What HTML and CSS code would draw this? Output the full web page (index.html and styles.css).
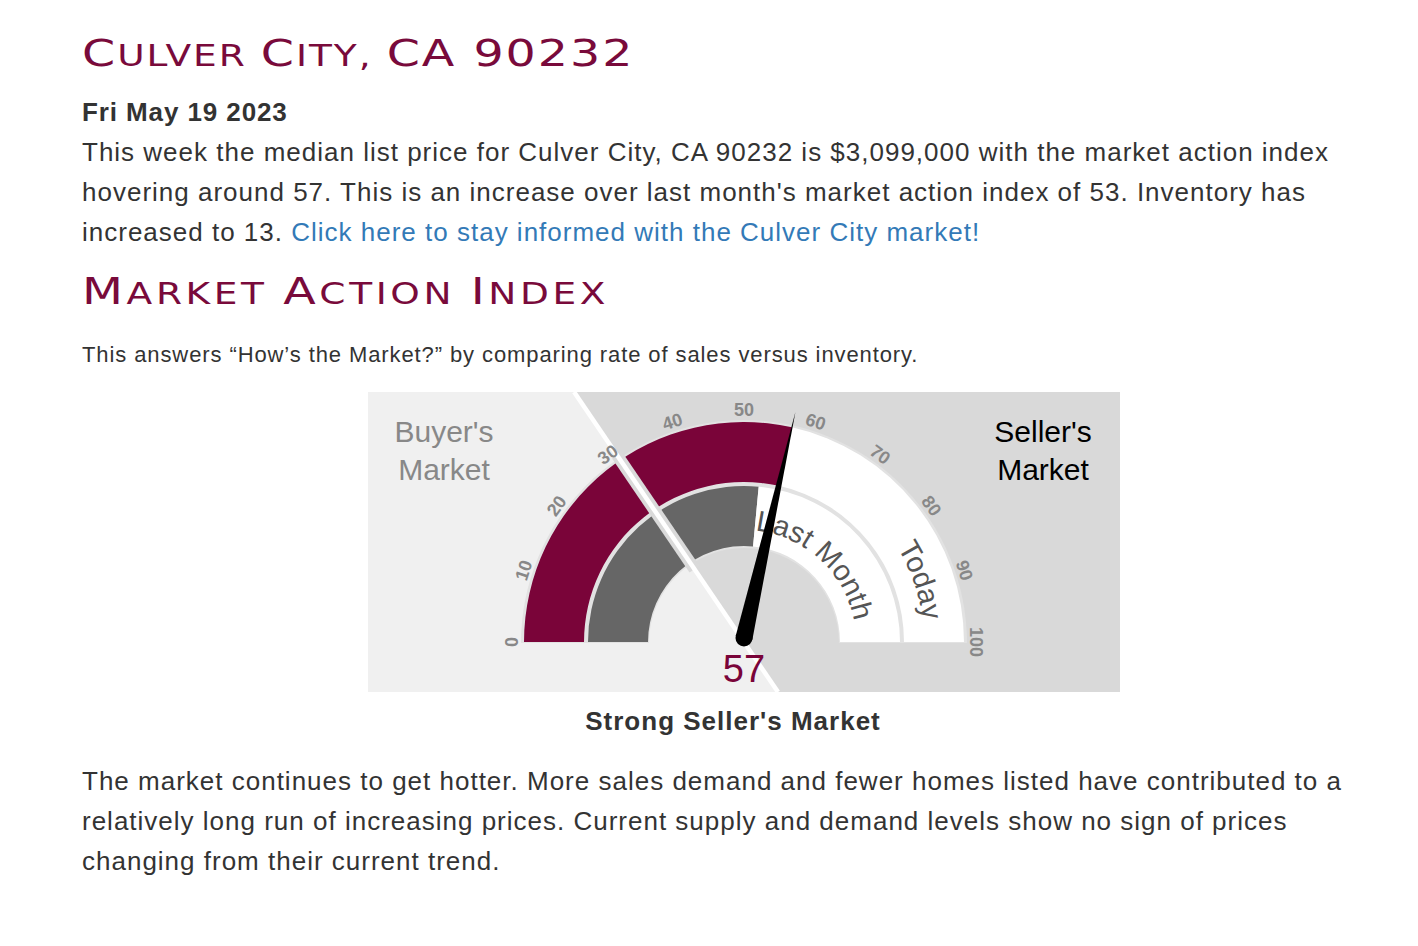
FILE: index.html
```html
<!DOCTYPE html>
<html lang="en">
<head>
<meta charset="utf-8">
<title>Culver City, CA 90232 - Market Action Index</title>
<link rel="stylesheet" href="styles.css">
</head>
<body>
<div class="page">
  <h1 class="heading"><span class="cap">C</span>ulver <span class="cap">C</span>ity, <span class="cap">CA 90232</span></h1>
  <div class="date">Fri May 19 2023</div>
  <p class="text">This week the median list price for Culver City, CA 90232 is $3,099,000 with the market action index hovering around 57. This is an increase over last month's market action index of 53. Inventory has increased to 13. <a class="link" href="#">Click here to stay informed with the Culver City market!</a></p>

  <h2 class="heading heading-2"><span class="cap">M</span>arket <span class="cap">A</span>ction <span class="cap">I</span>ndex</h2>
  <p class="intro">This answers “How’s the Market?” by comparing rate of sales versus inventory.</p>

  <div class="gauge">
    <svg class="gauge-svg" viewBox="0 0 752 300" width="752" height="300">
      <defs>
        <path id="arcLM" d="M264,250 A112,112 0 0 1 488,250"/>
        <path id="arcT" d="M196,250 A180,180 0 0 1 556,250"/>
      </defs>
      <polygon points="0,0 206.1,0 410,300 0,300" fill="#f0f0f0"/>
      <polygon points="206.1,0 752,0 752,300 410,300" fill="#d9d9d9"/>
      <path d="M153,251 A223,223 0 0 1 599,251 L471,251 A95,95 0 0 0 281,251 Z" fill="#e2e2e2"/>
      <path d="M156,250 A220,220 0 0 1 423.98,35.30 L410.90,93.86 A160,160 0 0 0 216,250 Z" fill="#7a0439"/>
      <path d="M423.98,35.30 A220,220 0 0 1 596,250 L536,250 A160,160 0 0 0 410.90,93.86 Z" fill="#ffffff"/>
      <path d="M220,250 A156,156 0 0 1 390.68,94.69 L385.03,154.42 A96,96 0 0 0 280,250 Z" fill="#666666"/>
      <path d="M390.68,94.69 A156,156 0 0 1 532,250 L472,250 A96,96 0 0 0 385.03,154.42 Z" fill="#ffffff"/>
      <line x1="326.5" y1="177.2" x2="249" y2="63.1" stroke="#dadada" stroke-width="12"/>
      <line x1="206.1" y1="0" x2="410" y2="300" stroke="#ffffff" stroke-width="4.5"/>

      <g class="ticks">
        <text transform="translate(144,250) rotate(-90)" dy="0.36em">0</text>
        <text transform="translate(155.35,178.31) rotate(-72)" dy="0.36em">10</text>
        <text transform="translate(188.31,113.63) rotate(-54)" dy="0.36em">20</text>
        <text transform="translate(239.63,62.31) rotate(-36)" dy="0.36em">30</text>
        <text transform="translate(304.31,29.35) rotate(-18)" dy="0.36em">40</text>
        <text transform="translate(376,18)" dy="0.36em">50</text>
        <text transform="translate(447.69,29.35) rotate(18)" dy="0.36em">60</text>
        <text transform="translate(512.37,62.31) rotate(36)" dy="0.36em">70</text>
        <text transform="translate(563.69,113.63) rotate(54)" dy="0.36em">80</text>
        <text transform="translate(596.65,178.31) rotate(72)" dy="0.36em">90</text>
        <text transform="translate(608,250) rotate(90)" dy="0.36em">100</text>
      </g>

      <text class="arc-label"><textPath href="#arcLM" startOffset="187">Last Month</textPath></text>
      <text class="arc-label"><textPath href="#arcT" startOffset="466">Today</textPath></text>

      <text class="side buyer" x="76" y="50">Buyer's</text>
      <text class="side buyer" x="76" y="88">Market</text>
      <text class="side seller" x="675" y="50">Seller's</text>
      <text class="side seller" x="675" y="88">Market</text>

      <polygon points="427.5,19.7 384.3,247.9 367.7,244.1" fill="#000"/>
      <circle cx="376" cy="246" r="8.5" fill="#000"/>

      <text class="value" x="376" y="290">57</text>
    </svg>
  </div>
  <div class="caption">Strong Seller's Market</div>

  <p class="text summary">The market continues to get hotter. More sales demand and fewer homes listed have contributed to a relatively long run of increasing prices. Current supply and demand levels show no sign of prices changing from their current trend.</p>
</div>
</body>
</html>
```

FILE: styles.css
```css
html, body {
  margin: 0;
  padding: 0;
  background: #ffffff;
}

.page {
  width: 1324px;
  padding: 31px 12px 40px 82px;
  font-family: "Liberation Sans", Arial, sans-serif;
  color: #333333;
}

.heading {
  width: fit-content;
  margin: 0;
  font-family: "DejaVu Sans", sans-serif;
  font-weight: normal;
  font-size: 30px;
  line-height: 44px;
  color: #790a3b;
  text-transform: uppercase;
  letter-spacing: 1.6px;
  transform: scaleX(1.25);
  transform-origin: left center;
  white-space: nowrap;
}

.heading .cap {
  font-size: 38px;
}

.heading-2 {
  margin-top: 17px;
  letter-spacing: 2.9px;
}

.date {
  margin-top: 14px;
  font-size: 26px;
  font-weight: bold;
  line-height: 40px;
  letter-spacing: 0.9px;
}

.text {
  margin: 0;
  font-size: 26px;
  line-height: 40px;
  letter-spacing: 1px;
}

.link {
  color: #337ab7;
  text-decoration: none;
}

.intro {
  margin: 25px 0 0 0;
  font-size: 22px;
  line-height: 28px;
  letter-spacing: 0.9px;
}

.gauge {
  margin-top: 23px;
  display: flex;
  justify-content: center;
}

.gauge-svg {
  display: block;
}

.gauge-svg text {
  font-family: "Liberation Sans", Arial, sans-serif;
}

.ticks text {
  font-size: 18px;
  font-weight: bold;
  fill: #888888;
  text-anchor: middle;
}

.arc-label {
  font-size: 29px;
  fill: #555555;
}

.side {
  font-size: 30px;
  text-anchor: middle;
}

.buyer {
  fill: #888888;
}

.seller {
  fill: #000000;
}

.value {
  font-size: 38px;
  fill: #7a0439;
  text-anchor: middle;
}

.caption {
  margin-top: 11px;
  padding-right: 22px;
  text-align: center;
  font-size: 26px;
  font-weight: bold;
  line-height: 36px;
  letter-spacing: 1px;
}

.summary {
  margin-top: 22px;
}
```
